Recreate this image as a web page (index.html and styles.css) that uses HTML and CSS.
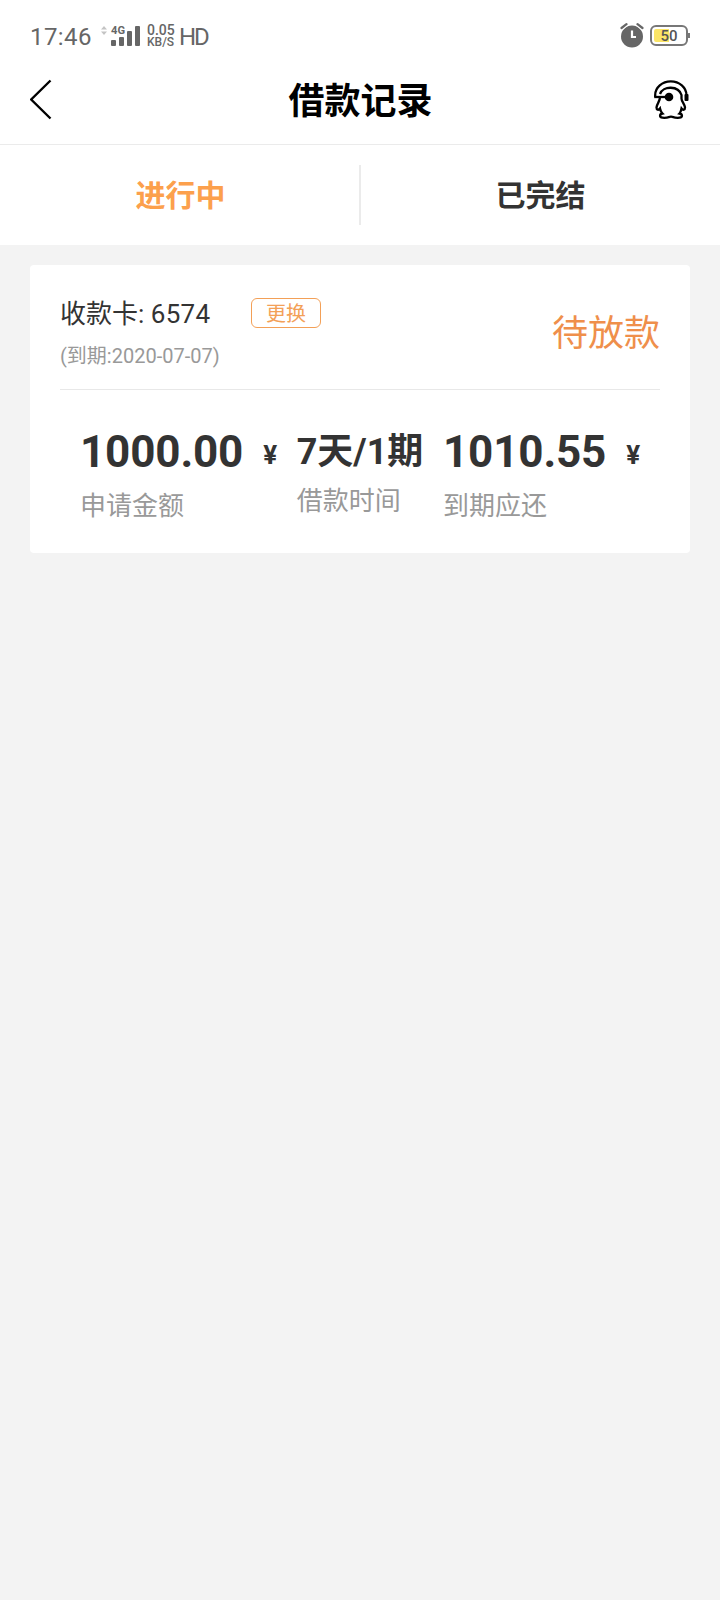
FILE: index.html
```
<!DOCTYPE html>
<html lang="zh-CN">
<head>
  <meta charset="UTF-8" />
  <meta name="viewport" content="width=device-width, initial-scale=1" />
  <title>借款记录</title>
  <link rel="stylesheet" href="styles.css">
</head>
<body>

  <!-- Status bar -->
  <div class="status-bar">
    <span class="time">17:46</span>
    <svg class="signal" width="40" height="24" viewBox="0 0 40 24">
      <path d="M0 5.500L3 2L6 5.500ZM0 7.500L3 11L6 7.500Z" fill="#c4c4c4"/>
      <text x="10" y="10" font-size="11.500" font-weight="700" fill="#666" textLength="14" lengthAdjust="spacingAndGlyphs">4G</text>
      <g fill="#666">
        <rect x="10" y="16" width="5" height="6" rx="1"/>
        <rect x="18" y="13" width="5" height="9" rx="1"/>
        <rect x="26" y="7" width="5" height="15" rx="1"/>
        <rect x="34" y="2" width="5" height="20" rx="1"/>
      </g>
    </svg>
    <div class="speed">
      <span class="rate">0.05</span>
      <span class="unit">KB/S</span>
    </div>
    <span class="hd">HD</span>
    <svg class="alarm" width="24" height="26" viewBox="0 0 24 26">
      <circle cx="12" cy="13.500" r="11" fill="#666"/>
      <path d="M1.500 5L6.500 1.200M22.500 5L17.500 1.200" stroke="#fff" stroke-width="4.500" stroke-linecap="round" fill="none"/>
      <path d="M1.500 5L6.500 1.200M22.500 5L17.500 1.200" stroke="#666" stroke-width="2.200" stroke-linecap="round" fill="none"/>
      <path d="M12 7.500V14H16" stroke="#fff" stroke-width="2.200" fill="none"/>
    </svg>
    <div class="battery"><span class="battery-level">50</span></div>
  </div>

  <!-- Header -->
  <header class="header">
    <svg class="back" width="24" height="42" viewBox="0 0 24 42">
      <path d="M20.500 1.500L1.200 20.500L20.500 39.500" fill="none" stroke="#000" stroke-width="2.400"/>
    </svg>
    <h1>借款记录</h1>
    <svg class="service" width="36" height="40" viewBox="0 0 36 40">
      <g fill="none" stroke="#000" stroke-width="2.300">
        <path d="M1.200 17V15A15.600 13.600 0 0 1 32.400 15V17"/>
        <path d="M6 14C9 5.500 24.500 5.500 27.500 15V18.500C27.500 21.500 30.500 23.500 31 27.500C31 30 29 30.500 27.500 28.500C27 31 26.500 32.500 25.500 33.500C28.500 34 29 37.200 25.500 37.700C21.500 38.200 19.500 37.200 17 36.500C14.500 37.200 12.500 38.200 8.500 37.700C5 37.200 5.500 34 8.500 33.500C7.500 32.500 6.500 31 6 28.500C4.500 30.500 2.500 30 2.500 27.500C3 23.500 6 21.500 6 17"/>
        <path d="M0.200 17H15"/>
      </g>
      <circle cx="15" cy="17" r="4.300"/>
      <rect x="30.500" y="14" width="4" height="7" rx="1"/>
    </svg>
  </header>

  <!-- Tabs -->
  <nav class="tabs">
    <a class="tab active">进行中</a>
    <a class="tab">已完结</a>
  </nav>

  <!-- Loan record -->
  <section class="card">
    <div class="card-head">
      <div class="bank">
        <div class="bank-row">
          <span class="bank-card">收款卡: <span class="tail">6574</span></span>
          <button class="change-btn">更换</button>
        </div>
        <p class="due-date">(到期:2020-07-07)</p>
      </div>
      <span class="status">待放款</span>
    </div>
    <div class="amounts">
      <div class="item">
        <p class="value">1000.00<span class="yuan">¥</span></p>
        <p class="label">申请金额</p>
      </div>
      <div class="item">
        <p class="value term">7天/1期</p>
        <p class="label">借款时间</p>
      </div>
      <div class="item">
        <p class="value">1010.55<span class="yuan">¥</span></p>
        <p class="label">到期应还</p>
      </div>
    </div>
  </section>

</body>
</html>
```
FILE: styles.css
```
* {
  box-sizing: border-box;
}
body {
  margin: 0;
  min-height: 100vh;
  background: #f3f3f3;
  font-family: Roboto, "Noto Sans CJK SC", sans-serif;
  color: #333;
}
h1, p {
  margin: 0;
}

/* Status bar */
.status-bar {
  display: flex;
  align-items: center;
  height: 72px;
  padding: 0 30px;
  background: #fff;
  color: #666;
}
.time {
  width: 71px;
  padding-top: 1px;
  font-size: 24px;
  letter-spacing: 0.4px;
}
.speed {
  display: flex;
  flex-direction: column;
  width: 32px;
  margin-left: 6px;
  font-weight: 500;
  line-height: 12px;
}
.rate {
  font-size: 14px;
}
.unit {
  font-size: 12px;
}
.hd {
  padding-top: 1px;
  font-size: 24px;
  letter-spacing: -2px;
}
.alarm {
  margin-left: auto;
}
.battery {
  position: relative;
  width: 38px;
  height: 21px;
  margin: 0 2px 1px 6px;
  padding: 2px;
  border: 2px solid #777;
  border-radius: 6px;
}
.battery::after {
  content: "";
  position: absolute;
  right: -4px;
  top: 6px;
  width: 2px;
  height: 5px;
  background: #777;
}
.battery-level {
  display: block;
  height: 13px;
  border-radius: 2px;
  background: linear-gradient(to right, #fbe566 50%, #fff 50%);
  font-size: 15px;
  font-weight: 500;
  line-height: 14px;
  text-align: center;
  color: #555;
}

/* Header */
.header {
  display: flex;
  align-items: center;
  height: 73px;
  padding: 0 30px 16px;
  border-bottom: 1px solid #ebebeb;
  background: #fff;
}
.header h1 {
  flex: 1;
  margin-left: 13px;
  padding-top: 4px;
  font-size: 36px;
  line-height: 52px;
  font-weight: 700;
  text-align: center;
  color: #000;
}

/* Tabs */
.tabs {
  display: flex;
  align-items: center;
  height: 100px;
  background: #fff;
}
.tab {
  flex: 1;
  height: 60px;
  font-size: 30px;
  font-weight: 700;
  line-height: 62px;
  text-align: center;
}
.tab.active {
  text-indent: 2px;
  color: #fca04c;
}
.tab + .tab {
  border-left: 2px solid #ebebeb;
}

/* Card */
.card {
  height: 288px;
  margin: 20px 30px;
  padding: 0 30px;
  border-radius: 4px;
  background: #fff;
}
.card-head {
  display: flex;
  align-items: center;
  justify-content: space-between;
  height: 125px;
  padding-top: 14px;
  border-bottom: 1px solid #e8e8e8;
}
.bank-row {
  display: flex;
  align-items: center;
}
.bank-card {
  width: 191px;
  padding-top: 2px;
  font-size: 26px;
  line-height: 42px;
}
.tail {
  letter-spacing: 0.3px;
}
.change-btn {
  width: 70px;
  height: 30px;
  padding: 0;
  border: 1px solid #f3a057;
  border-radius: 6px;
  background: #fff;
  font-family: inherit;
  font-size: 20px;
  line-height: 30px;
  color: #f3a057;
}
.due-date {
  font-size: 20px;
  line-height: 42px;
  color: #999;
}
.status {
  font-size: 36px;
  line-height: 50px;
  color: #ef8f4b;
}
.amounts {
  display: flex;
  justify-content: space-between;
  padding: 36px 20px 0;
}
.value {
  height: 52px;
  font-size: 44px;
  font-weight: 700;
  letter-spacing: -0.15px;
  line-height: 52px;
}
.value.term {
  height: 50px;
  letter-spacing: 0;
  line-height: 52px;
  font-size: 36px;
}
.yuan {
  margin-left: 20px;
  font-size: 26px;
  line-height: 1;
  vertical-align: 3px;
}
.label {
  font-size: 26px;
  line-height: 56px;
  color: #999;
}
.term + .label {
  line-height: 50px;
}
```
